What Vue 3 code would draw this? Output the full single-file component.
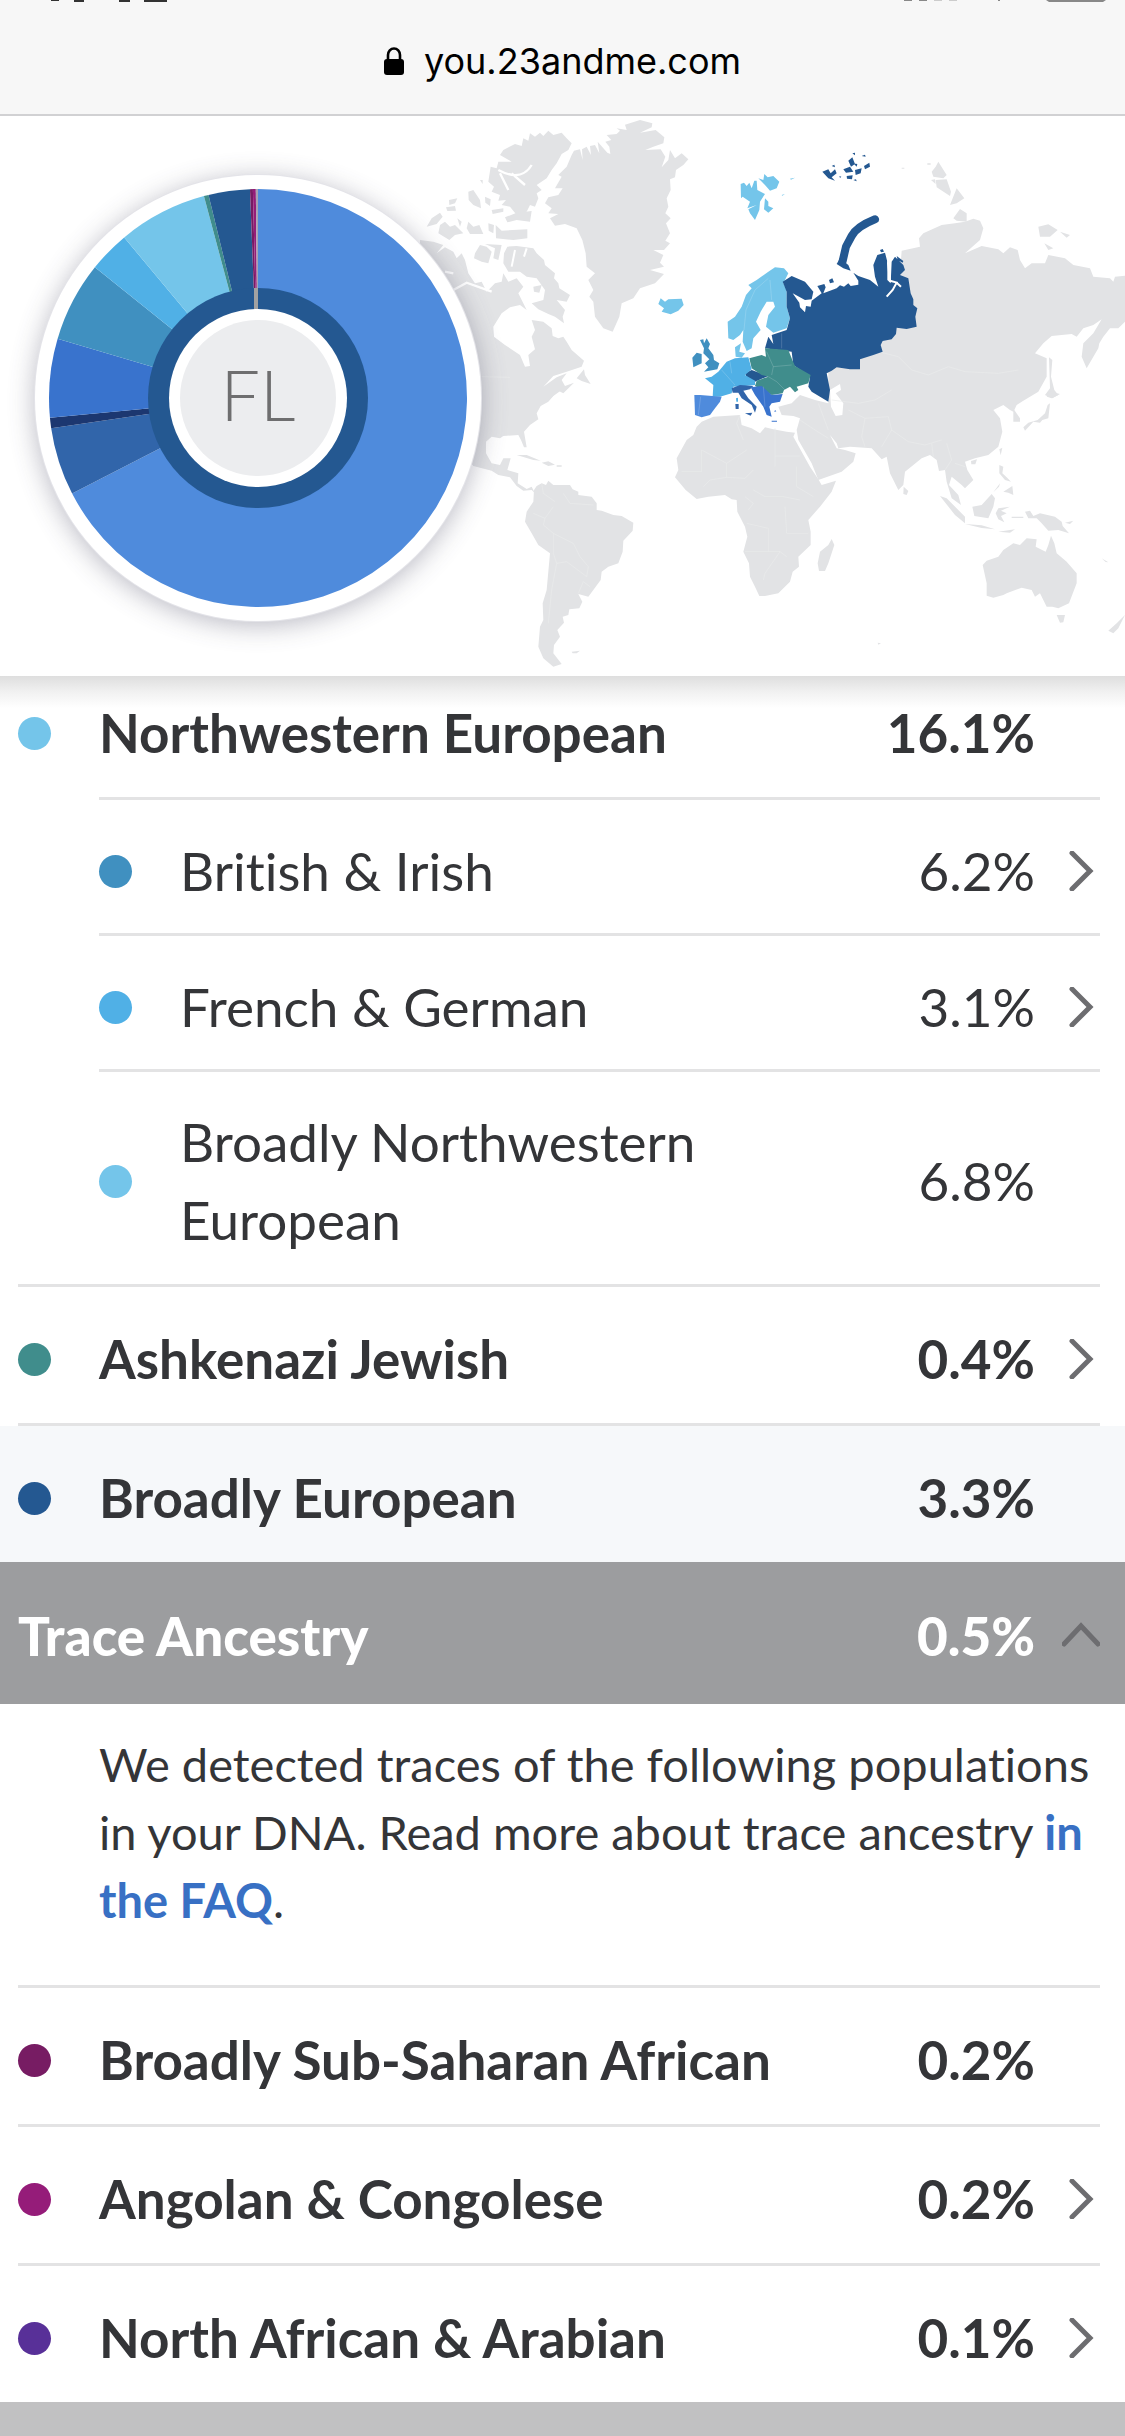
<script setup>
import { ref } from 'vue'

const groups = [
  { name: 'Northwestern European', value: '16.1%', color: '#74c5ea', first: true, inset: true },
  { name: 'British & Irish', value: '6.2%', color: '#4090c0', nested: true, inset: true, link: true },
  { name: 'French & German', value: '3.1%', color: '#50b0e6', nested: true, inset: true, link: true },
  { name: 'Broadly Northwestern European', value: '6.8%', color: '#74c5ea', nested: true },
  { name: 'Ashkenazi Jewish', value: '0.4%', color: '#408d8c', link: true },
  { name: 'Broadly European', value: '3.3%', color: '#245891', shaded: true, last: true }
]

const traces = [
  { name: 'Broadly Sub-Saharan African', value: '0.2%', color: '#771c63' },
  { name: 'Angolan & Congolese', value: '0.2%', color: '#951c79', link: true },
  { name: 'North African & Arabian', value: '0.1%', color: '#583098', link: true, last: true }
]

const open = ref(true)

const slices = [
  { from: 0, to: 242.8, color: '#4f8bdc' },
  { from: 242.8, to: 261.7, color: '#3165aa' },
  { from: 261.7, to: 264.6, color: '#1c3770' },
  { from: 264.6, to: 286.5, color: '#3973cd' },
  { from: 286.5, to: 308.7, color: '#4090c0' },
  { from: 308.7, to: 320.2, color: '#50b0e6' },
  { from: 320.2, to: 345, color: '#74c5ea' },
  { from: 345, to: 346.3, color: '#408d8c' },
  { from: 346.3, to: 357.8, color: '#245891' },
  { from: 357.8, to: 358.6, color: '#771c63' },
  { from: 358.6, to: 359.4, color: '#951c79' },
  { from: 359.4, to: 360, color: '#a9a2b4' }
]

function wedge({ from, to }, r) {
  const point = (deg) => {
    const a = ((deg - 90) * Math.PI) / 180
    return `${(258 + r * Math.cos(a)).toFixed(2)} ${(398 + r * Math.sin(a)).toFixed(2)}`
  }
  return `M258 398L${point(from)}A${r} ${r} 0 ${to - from > 180 ? 1 : 0} 1 ${point(to)}Z`
}
</script>

<template>
  <main class="page">
    <header class="browser-bar">
      <svg class="status" viewBox="0 0 1125 2" aria-hidden="true">
        <path d="M51 0h8v1h-8zM74 0h10v2h-10zM119 0h11v2h-11zM144 0h23v2h-23z" fill="#333" />
        <path d="M904 0h8v1h-8zM919 0h8v1h-8zM998 0h2v1h-2zM1046 0h60l-3 2h-54z" fill="#888" />
        <path d="M934 0h8v1h-8zM949 0h8v1h-8z" fill="#ccc" />
      </svg>
      <svg class="lock" viewBox="0 0 20 28" aria-hidden="true">
        <rect x="0" y="12" width="20" height="16" rx="3" />
        <path d="M4 13V8a6 6.500 0 0 1 12 0v5" fill="none" stroke="#000" stroke-width="2.600" />
      </svg>
      <span>you.23andme.com</span>
    </header>

    <section class="hero">
      <svg class="chart" viewBox="0 116 1125 560" role="img" aria-label="Ancestry composition chart and world map">
        <defs>
          <filter id="soft" x="-20%" y="-20%" width="140%" height="140%">
            <feGaussianBlur stdDeviation="14" />
          </filter>
        </defs>
        <g fill="#e2e3e5">
          <g transform="translate(420 110) scale(.33333)">
            <path d="M455 135L462 122 480 118 488 150 486 118 500 110 513 135 510 108 525 105 538 130 533 95 562 128 571 132 568 110 556 95 574 90 560 75 590 72 600 62 590 55 620 60 615 44 660 30 697 40 695 52 660 68 707 60 733 82 730 100 700 110 676 120 722 118 736 140 725 172 745 150 750 120 765 145 785 130 805 148 790 165 768 180 765 202 750 208 752 240 740 265 745 290 736 310 752 325 738 340 750 370 736 392 750 400 732 420 700 420 730 435 720 458 732 470 690 480 732 492 705 520 660 535 640 565 605 580 598 620 578 665 550 655 525 620 520 575 508 560 520 540 505 510 525 490 500 470 497 430 487 390 470 355 435 342 405 347 390 325 415 312 385 310 395 295 375 280 385 262 415 255 428 235 405 235 425 200 415 195 440 170Z" />
            <path d="M240 135L250 120 285 102 305 108 310 85 325 92 330 70 345 80 360 68 370 78 385 62 400 75 425 68 440 85 455 100 445 120 425 132 410 160 395 180 380 205 350 225 365 240 350 250 355 265 345 290 330 285 320 305 290 315 270 290 245 285 258 270 235 272 240 255 215 245 222 230 205 215 212 170 230 175 235 155 275 155Z" />
            <path d="M235 180C290 210 320 190 335 165M275 190L315 225M240 190L265 240" fill="none" stroke="#fff" stroke-width="7" />
            <path d="M255 322L290 308 335 303 330 335 290 330 262 337ZM227 345L245 362 322 358 322 385 280 390 228 385ZM205 340L222 345 220 370 206 362ZM145 245L160 240 180 270 183 295 160 285 146 270ZM195 260L212 268 210 288 196 278ZM87 270L112 265 105 280 88 285ZM78 292L105 288 108 302 82 303ZM20 350L35 325 60 308 68 320 50 342ZM60 345L75 335 90 350 105 345 130 370 105 375 88 390 55 370ZM112 325L125 335 120 350ZM145 335L160 350 178 345 190 372 150 372 140 355ZM180 210L188 210 188 222ZM215 300L250 295 250 305 218 312Z" />
            <path d="M165 430L180 405 200 410 215 425 205 460 185 455 162 445ZM195 402L245 405 235 450 220 445 225 415ZM340 530L365 525 358 548 342 545Z" />
            <path d="M252 430L262 410 290 408 340 415 350 430 372 450 375 465 405 490 402 505 415 520 418 535 450 555 440 575 410 570 435 600 428 620 432 640 405 620 385 612 355 598 335 580 370 570 375 540 350 505 320 500 300 485 265 485 250 460Z" />
            <path d="M285 420L275 470M320 415L312 440" stroke="#fff" stroke-width="6" fill="none" />
            <path d="M0 390L40 395 70 405 50 430 75 412 100 425 110 445 125 430 135 450 145 490 165 520 185 515 200 545 225 520 245 515 250 490 265 515 290 505 310 530 295 550 320 600 300 585 270 592 245 610 220 650 222 680 255 705 300 735 315 770 330 768 325 735 345 718 335 680 345 660 335 630 370 635 395 655 398 678 415 685 430 680 440 695 455 720 492 752 485 770 440 785 400 798 370 830 410 802 440 790 425 810 435 828 462 818 430 850 415 842 385 872 0 872Z" />
            <path d="M75 485L100 490M100 540L140 518 215 545" stroke="#fff" stroke-width="7" fill="none" />
            <path d="M470 805L492 778 495 795 512 822 485 813Z" />
          </g>
          <g transform="translate(420 390) scale(.33333)">
            <path d="M0 0L425 0 400 18 385 35 362 48 350 70 355 88 330 105 312 125 320 172 312 172 303 150 295 135 250 138 240 145 215 140 198 155 198 190 215 220 240 225 250 205 272 205 262 240 295 250 293 280 320 297 335 290 345 310 335 300 310 302 290 288 270 262 235 255 215 242 160 228 100 150 0 150Z" />
            <path d="M290 195L320 195 362 212 340 210ZM365 218L385 214 405 224 385 228ZM410 226h15v4h-15ZM455 785l25-3-10 8h-12Z" />
            <path d="M342 300L350 288 365 280 378 285 385 272 400 285 450 285 458 298 475 305 475 315 515 320 530 340 530 360 545 362 580 375 605 378 640 398 638 422 610 452 608 485 595 520 565 530 545 545 542 570 505 620 475 612 487 635 478 655 448 658 445 675 428 680 432 698 412 720 420 740 402 765 400 790 425 822 400 830 370 805 355 770 360 710 370 690 368 640 380 600 390 490 355 465 335 430 315 395 320 365 340 335Z" />
            <path d="M845 95L880 80 960 75 965 105 995 115 1020 130 1035 112 1060 118 1100 125 1125 128 1120 140 1170 230 1195 268 1205 285 1248 272 1235 305 1200 350 1165 390 1172 425 1172 465 1135 500 1137 530 1118 545 1110 575 1075 610 1035 618 1018 618 1005 590 990 560 987 520 970 485 982 440 975 410 952 365 950 330 935 328 915 315 865 320 830 327 797 300 765 262 775 240 770 205 800 150 820 135 830 110Z" />
            <g fill="none" stroke="#eaebec" stroke-width="2">
              <path d="M365 280L370 310 405 335M340 370L375 385 400 350M375 385L370 405 400 430 460 460 480 500 505 530 500 560M400 430L400 490 410 520 440 515 500 560M410 520L395 600 385 700M430 310L450 340 520 345M475 610L490 575 510 590M185 -40L270 -38" />
              <path d="M845 180L920 220 980 180M960 75L950 100 970 150M845 180V245H785M920 220L920 262 870 270 850 290M920 262L975 265 1000 240M1065 115V198M1065 198H1140M1065 198V230M1000 300L1035 320 1090 320 1140 330M1130 230L1130 290 1180 320M980 400L1045 415V485H975M1045 485H1080L1035 550 1030 570M1095 350L1100 430 1165 430M1080 485L1100 500M975 320L1000 340 985 360" />
            </g>
          </g>
          <g transform="translate(765 110) scale(.33333)">
            <path d="M410 422L465 410 462 385 475 370 530 345 570 340 600 335 625 326 645 332 655 355 645 390 600 430 650 408 700 418 715 430 735 412 758 420 765 450 780 475 800 460 840 460 850 435 900 445 925 465 975 475 985 500 1035 505 1045 515 1050 500 1080 497 1080 635 1060 655 1035 655 1015 680 1003 700 1000 715 965 775 950 740 955 700 985 670 1010 628 985 645 955 655 935 680 920 672 860 678 835 700 810 730 845 745 845 800 820 845 775 872 755 885 748 900 765 925 765 935 745 935 745 905 735 900 715 885 685 900 705 925 712 965 700 1010 670 1035 630 1045 600 1055 607 1080 625 1110 600 1135 590 1125 560 1100 552 1125 580 1155 588 1185 560 1165 545 1115 540 1080 522 1083 515 1050 495 1035 470 1045 420 1085 415 1125 400 1140 375 1090 365 1040 350 1048 320 1015 255 1010 220 1015 215 1000 195 975 215 1015 240 1020 272 1030 265 1055 230 1085 160 1110 140 1060 100 990 95 960 105 925 85 918 50 915 40 890 80 880 105 855 150 870 190 880 190 760 300 740 400 550Z" />
            <path d="M195 840L225 822 228 840 212 850 235 880 232 915 212 918 198 890Z" fill="#fff" />
            <path d="M500 185L512 170 520 155 545 195 535 205 505 200ZM498 210L510 208 512 222ZM512 210L545 208 558 245 555 258 515 232ZM575 235L598 265 575 280 555 285ZM565 325L585 297 605 310 605 335 575 332ZM820 350L850 343 878 360 855 380 825 380ZM885 365L915 375 905 383ZM838 400L865 415 850 420ZM487 160h10v4h-10ZM410 173h8v3h-8ZM852 742L862 750 858 800 868 840 880 855 860 865 840 855 855 835Z" />
            <g fill="none" stroke="#eaebec" stroke-width="2">
              <path d="M290 740L340 725 400 740 440 780 490 795 550 770 600 785 700 790 760 780M200 870L280 880 330 870 380 840M250 900L300 925 370 920 380 960 350 1010M300 925L290 980 300 1010M380 960L430 995 480 1005 530 990M500 1000L505 1040M545 1000L560 1050 540 1080M160 880L190 960M105 930L150 960 190 985M570 1060L600 1070" />
            </g>
          </g>
          <g transform="translate(765 390) scale(.33333)">
            <path d="M200 447L208 465 190 520 180 543 162 543 158 520 165 485 190 465ZM416 290L430 303 425 315 415 312ZM525 318L545 325 600 380 600 400 570 375ZM600 402L650 406 690 418 650 414ZM622 350L650 345 680 312 690 325 685 350 670 385 628 378ZM692 370L700 355 735 350 708 362 725 370 708 378 718 397 700 388ZM703 225L715 230 712 250 725 262 738 275 720 270 703 250ZM715 305L742 288 745 315 730 308ZM685 307L705 280 702 290ZM780 365L795 362 805 378 825 370 870 380 890 395 893 408 912 430 880 420 850 422 830 400 815 385 790 385ZM900 398L925 392 915 402ZM700 425L750 418 735 428ZM740 380h35v4h-35ZM703 178l9-5-5 23ZM618 213l18-5-5 15h-12ZM1010 505l20 12-8-1Z" />
            <path d="M653 525L665 512 700 500 715 480 745 460 765 465 785 445 815 448 812 470 842 485 850 465 858 437 868 460 875 490 905 515 935 550 935 580 912 640 880 655 862 650 845 650 825 610 810 620 800 600 770 593 725 610 715 615 685 623 665 617 665 580ZM875 675L900 675 895 697 885 698ZM1080 675L1060 715 1045 730 1030 722 1055 700ZM848 45L855 40 850 85 832 90 825 98 805 95 780 122 775 112 790 98 818 90 840 70ZM845 20L858 5 885 12 862 25ZM338 758l10 2-8 4Z" />
          </g>
        </g>
        <g transform="translate(640 130) scale(.33333)">
          <g fill="#74c5ea">
            <path d="M302 162L312 158 320 168 328 158 335 175 343 152 350 152 352 180 375 192 360 215 358 240 345 270 330 250 325 238 350 225 322 235 330 215 308 200 303 205ZM355 145L370 150 373 132 383 142 400 138 418 155 410 175 390 182 375 165ZM375 205L385 215 385 228 400 235 385 248 372 238ZM450 146l15-3-12 6ZM425 195l10-3-8 5Z" />
            <path d="M55 522L62 505 75 515 85 508 125 506 131 525 115 542 92 553 65 545 72 535Z" />
            <path d="M263 575L265 625 280 630 300 615 310 600 308 635 320 663 335 655 340 625 362 600 348 575 362 545 380 515 400 515 405 530 385 555 378 590 400 608 440 595 450 565 440 530 440 480 430 460 445 430 432 415 405 412 385 425 350 450 325 465 335 475 318 495 305 530 285 560ZM285 652L303 640 298 665 315 670 305 683 287 680Z" />
          </g>
          <g fill="#245891">
            <path d="M547 125L565 118 572 130 585 118 590 130 575 142 585 152 565 145ZM575 108l8-4 2 8ZM610 118l20-8 10 15-22 3ZM625 92l12-10 8 20-12 8ZM640 100l12 2-2 8ZM645 120l20-5-3 15-15 5ZM620 138l18-2-2 12-15-2ZM672 108L688 98 690 110 675 118ZM637 70l8-2v8ZM665 78l10-4 2 6ZM640 150l8-2 2 6ZM598 138l6 2-4 4Z" />
            <path d="M705 268Q650 290 635 318L618 350 608 393" fill="none" stroke="#245891" stroke-width="24" stroke-linecap="round" />
            <path d="M590 402L600 385 625 405 632 422 610 415Z" />
            <path d="M428 455L455 438 495 455 520 485 515 508 495 510 458 490 478 518 480 532 495 547 498 528 512 530 515 512 545 490 532 468 553 462 557 472 550 490 590 475 600 466 612 470 625 460 632 468 655 464 655 452 640 428 655 438 690 450 715 470 705 440 700 405 712 375 735 368 742 395 742 450 752 460 755 395 765 380 790 405 795 420 780 435 805 445 812 490 820 508 820 525 832 535 826 560 830 590 800 597 770 593 768 612 755 628 728 633 722 645 728 665 700 675 660 688 660 718 630 718 590 712 575 722 560 730 570 780 565 815 540 800 515 785 505 770 510 740 460 705 455 665 375 655 385 620 400 642 395 615 440 600 450 565 440 530 440 485ZM567 450l10-5 5 12-12 3ZM720 360l8-3 4 8-9 2ZM770 378l20 15-2 5-15-8Z" />
            <path d="M315 730L335 720 385 738 345 755 320 742Z" />
          </g>
          <path d="M747 372L744 400 750 452 770 458 758 480 740 500M770 458L783 470" fill="none" stroke="#fff" stroke-width="6" />
          <path d="M328 685L365 675 378 680 375 655 445 660 457 690 465 708 512 735 505 760 470 770 475 780 465 787 450 770 432 780 428 790 395 795 345 768 350 752 385 740 365 735 335 715Z" fill="#408d8c" />
          <path d="M195 745L215 740 235 725 260 695 285 685 325 682 335 718 315 735 345 752 345 765 315 768 280 770 275 790 240 800 218 800 220 765ZM288 805l6-2v12h-5Z" fill="#50b0e6" />
          <path d="M275 775L300 765 340 768 330 778 310 782 325 805 350 830 345 848 335 825 305 805 295 788 278 788ZM315 850L337 848 332 857ZM286 822h10v15h-9Z" fill="#3165aa" />
          <path d="M332 772L365 768 395 795 428 792 420 815 395 820 388 830 395 860 380 855 370 830 345 795ZM395 872h16v3h-16ZM405 840l4 4-6 2Z" fill="#3973cd" />
          <path d="M163 795L180 795 245 800 240 815 225 835 210 855 185 862 165 855Z" fill="#4f8bdc" />
          <path d="M180 630L190 628 192 640 200 625 210 642 205 655 220 675 222 690 238 700 232 718 192 725 205 712 195 700 208 688 190 670 192 655ZM157 683L170 668 185 672 185 700 160 712Z" fill="#4090c0" />
          <g fill="none" stroke="#fff" stroke-opacity=".25" stroke-width="2">
            <path d="M312 600L318 540 345 480 385 445M395 510L390 450M275 730L270 695M245 720L285 765M395 735L400 710 380 665M400 710L455 705M410 755L435 780M370 770L375 830M425 610V655M385 740L410 755M182 800L175 855" />
          </g>
        </g>

        <circle cx="258" cy="402" r="222" fill="#40405a" opacity=".4" filter="url(#soft)" />
        <circle cx="258" cy="398" r="224" fill="#e4e4e9" />
        <circle cx="258" cy="398" r="223" fill="#fff" />
        <path v-for="s in slices" :key="s.from" :d="wedge(s, 209)" :fill="s.color" />
        <circle cx="258" cy="398" r="110" fill="#245891" />
        <path d="M254 288h4v22h-4z" fill="#a2a2a2" />
        <circle cx="258" cy="398" r="89" fill="#fff" />
        <circle cx="258" cy="398" r="78" fill="#ecedef" />
        <text class="initials" x="258" y="421" text-anchor="middle">FL</text>
      </svg>
    </section>

    <ul class="list">
      <li
        v-for="g in groups"
        :key="g.name"
        :class="{ first: g.first, nested: g.nested, inset: g.inset, shaded: g.shaded, last: g.last }"
      >
        <component :is="g.link ? 'a' : 'div'" class="row" :href="g.link ? '#' : null">
          <i class="dot" :style="{ background: g.color }"></i>
          <span class="name">{{ g.name }}</span>
          <span class="value">{{ g.value }}</span>
          <svg class="chevron" viewBox="0 0 38 40" aria-hidden="true">
            <path v-if="g.link" d="M10 2L28 20 10 38" />
          </svg>
        </component>
      </li>
    </ul>

    <button class="trace" type="button" :aria-expanded="open" @click="open = !open">
      <span class="name">Trace Ancestry</span>
      <span class="value">0.5%</span>
      <svg class="chevron" viewBox="0 0 38 40" aria-hidden="true">
        <path d="M2 28L19 10 36 28" />
      </svg>
    </button>

    <template v-if="open">
      <p class="note">
        We detected traces of the following populations in your DNA. Read more about trace ancestry
        <a href="#">in the FAQ</a>.
      </p>
      <ul class="list traces">
        <li v-for="t in traces" :key="t.name" :class="{ last: t.last }">
          <component :is="t.link ? 'a' : 'div'" class="row" :href="t.link ? '#' : null">
            <i class="dot" :style="{ background: t.color }"></i>
            <span class="name">{{ t.name }}</span>
            <span class="value">{{ t.value }}</span>
            <svg class="chevron" viewBox="0 0 38 40" aria-hidden="true">
              <path v-if="t.link" d="M10 2L28 20 10 38" />
            </svg>
          </component>
        </li>
      </ul>
    </template>
    <footer class="bottom"></footer>
  </main>
</template>

<style>
body {
  margin: 0;
  background: #fff;
}
</style>

<style scoped>
.page {
  min-height: 100vh;
  display: flex;
  flex-direction: column;
  font-family: Lato, 'Liberation Sans', sans-serif;
  font-variant-ligatures: none;
  color: #343538;
}
.browser-bar {
  position: relative;
  box-sizing: border-box;
  height: 116px;
  padding-top: 8px;
  display: flex;
  align-items: center;
  justify-content: center;
  gap: 20px;
  background: #f7f7f7;
  border-bottom: 2px solid #d1d1d3;
  font: 36px/48px Inter, sans-serif;
  color: #000;
}
.status {
  position: absolute;
  top: 0;
  left: 0;
  width: 100%;
}
.lock {
  width: 20px;
  height: 28px;
}
.hero {
  position: relative;
}
.hero::after {
  content: '';
  position: absolute;
  top: 100%;
  left: 0;
  right: 0;
  height: 32px;
  background: linear-gradient(#dedede, #f1f1f1 50%, #fff);
}
.chart {
  display: block;
  width: 100%;
}
.initials {
  font-family: Lato, sans-serif;
  font-size: 70px;
  font-weight: 300;
  fill: #6e6e6f;
}
.list {
  margin: 0;
  padding: 0;
  list-style: none;
}
li::after {
  content: '';
  display: block;
  height: 3px;
  margin: 0 25px 0 18px;
  background: #e3e3e4;
}
li.inset::after {
  margin-left: 99px;
}
li.last::after {
  display: none;
}
.row {
  display: flex;
  align-items: center;
  padding: 33px 25px 25px 18px;
  font-size: 53px;
  line-height: 78px;
  font-weight: 700;
  color: inherit;
  text-decoration: none;
}
.nested .row {
  padding: 31px 25px 25px 99px;
  font-weight: 400;
}
.nested.inset .row {
  padding: 32px 25px 23px 99px;
}
.first .row {
  padding-top: 18px;
  padding-bottom: 25px;
}
.shaded {
  background: #f6f8fa;
}
.dot {
  flex: none;
  width: 33px;
  height: 33px;
  margin-right: 48px;
  border-radius: 50%;
}
.name {
  flex: 1;
  max-width: 700px;
  margin-right: auto;
}
.nested .name {
  max-width: 560px;
}
.value {
  margin-right: 27px;
}
.chevron {
  flex: none;
  width: 38px;
  height: 40px;
  fill: none;
  stroke: #6d6d70;
  stroke-width: 5px;
  stroke-linecap: round;
}
.trace {
  display: flex;
  align-items: center;
  padding: 35px 25px 29px 18px;
  border: 0;
  background: #9c9d9f;
  color: #fff;
  font: 900 53px/78px Lato, sans-serif;
  text-align: left;
}
.note {
  margin: 0;
  padding: 26px 18px 51px 99px;
  font-size: 47px;
  line-height: 68px;
}
.note a {
  color: #3870c4;
  font-weight: 700;
  text-decoration: none;
}
.traces {
  border-top: 3px solid transparent;
  background: linear-gradient(#e3e3e4, #e3e3e4) 18px 0 / calc(100% - 43px) 3px no-repeat border-box;
}
.bottom {
  flex: 1;
  min-height: 33px;
  background: #c1c1c2;
}
</style>
